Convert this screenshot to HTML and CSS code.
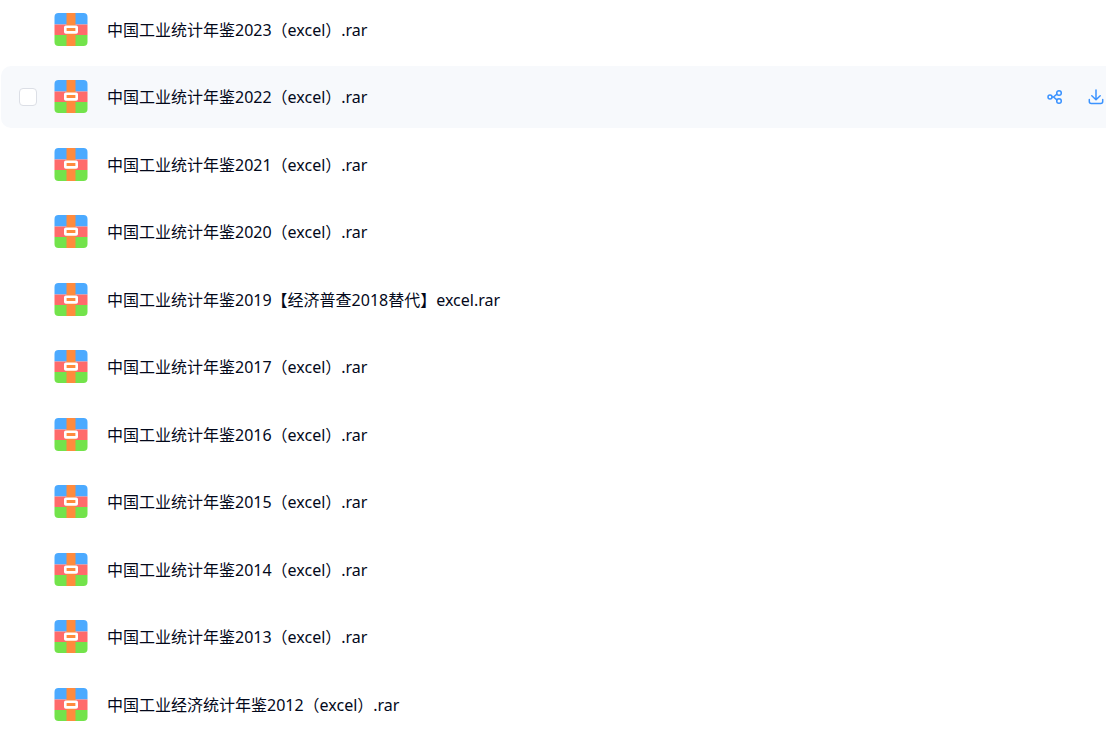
FILE: index.html
```
<!DOCTYPE html>
<html lang="zh-CN">
<head>
    <meta charset="UTF-8">
    <meta name="viewport" content="width=device-width, initial-scale=1.0">
    <title>中国工业统计年鉴</title>
    <link rel="stylesheet" href="styles.css">
</head>
<body>

    <!-- 压缩包图标 -->
    <svg class="symbols" aria-hidden="true">
        <symbol id="rar" viewBox="0 0 34 34">
            <path fill="#4caaff" d="M.5 11.500V4a4 4 0 0 1 4-4h25a4 4 0 0 1 4 4v7.500z"/>
            <path fill="#ff6b6b" d="M.5 11.500h33v10.500H.5z"/>
            <path fill="#73e34b" d="M.5 22h33v7a4 4 0 0 1-4 4h-25a4 4 0 0 1-4-4z"/>
            <path fill="#ff8b3d" d="M12.500 0h9v33h-9z"/>
            <rect x="11.300" y="13.800" width="11.400" height="5.600" rx="0.500" fill="#ff8b3d" stroke="#fff" stroke-width="2.600"/>
        </symbol>
    </svg>

    <ul class="file-list">
        <li class="file-row">
            <svg class="file-icon"><use href="#rar"/></svg>
            <a class="file-name" href="#">中国工业统计年鉴2023（excel）.rar</a>
        </li>
        <li class="file-row active">
            <input type="checkbox" class="file-check" aria-label="选择 中国工业统计年鉴2022（excel）.rar">
            <svg class="file-icon"><use href="#rar"/></svg>
            <a class="file-name" href="#">中国工业统计年鉴2022（excel）.rar</a>
            <div class="actions">
                <button type="button" aria-label="分享">
                    <svg viewBox="0 0 16 16">
                        <circle cx="3" cy="8" r="2"/>
                        <circle cx="12" cy="4" r="2.300"/>
                        <circle cx="12" cy="12" r="2.300"/>
                        <path d="M5 8h1.500l3.400-2.800M6.500 8l3.400 2.800"/>
                    </svg>
                </button>
                <button type="button" aria-label="下载">
                    <svg viewBox="0 0 16 16">
                        <path d="M8 1v9.500M3.800 6.700 8 10.700l4.200-4M1.300 10.500v2a2 2 0 0 0 2 2h9.400a2 2 0 0 0 2-2v-2"/>
                    </svg>
                </button>
            </div>
        </li>
        <li class="file-row">
            <svg class="file-icon"><use href="#rar"/></svg>
            <a class="file-name" href="#">中国工业统计年鉴2021（excel）.rar</a>
        </li>
        <li class="file-row">
            <svg class="file-icon"><use href="#rar"/></svg>
            <a class="file-name" href="#">中国工业统计年鉴2020（excel）.rar</a>
        </li>
        <li class="file-row">
            <svg class="file-icon"><use href="#rar"/></svg>
            <a class="file-name" href="#">中国工业统计年鉴2019【经济普查2018替代】excel.rar</a>
        </li>
        <li class="file-row">
            <svg class="file-icon"><use href="#rar"/></svg>
            <a class="file-name" href="#">中国工业统计年鉴2017（excel）.rar</a>
        </li>
        <li class="file-row">
            <svg class="file-icon"><use href="#rar"/></svg>
            <a class="file-name" href="#">中国工业统计年鉴2016（excel）.rar</a>
        </li>
        <li class="file-row">
            <svg class="file-icon"><use href="#rar"/></svg>
            <a class="file-name" href="#">中国工业统计年鉴2015（excel）.rar</a>
        </li>
        <li class="file-row">
            <svg class="file-icon"><use href="#rar"/></svg>
            <a class="file-name" href="#">中国工业统计年鉴2014（excel）.rar</a>
        </li>
        <li class="file-row">
            <svg class="file-icon"><use href="#rar"/></svg>
            <a class="file-name" href="#">中国工业统计年鉴2013（excel）.rar</a>
        </li>
        <li class="file-row">
            <svg class="file-icon"><use href="#rar"/></svg>
            <a class="file-name" href="#">中国工业经济统计年鉴2012（excel）.rar</a>
        </li>
    </ul>

</body>
</html>
```
FILE: styles.css
```
body {
    margin: 0;
    background-color: #fff;
    font-family: "Noto Sans", "Noto Sans CJK SC", sans-serif;
    font-size: 16px;
    line-height: 24px;
    color: #03081a;
    overflow: hidden;
}

.symbols {
    display: none;
}

.file-list {
    list-style: none;
    margin: -1px 0 0 1px;
    padding: 0;
}

.file-row {
    display: grid;
    grid-template-columns: 18px 34px 1fr auto;
    column-gap: 17px;
    align-items: center;
    box-sizing: border-box;
    min-height: 62px;
    margin-bottom: 5px;
    padding: 0 2px 0 18px;
    border-radius: 10px 0 0 10px;
}

.file-row:nth-child(even) {
    margin-bottom: 6px;
}

.file-row.active {
    background-color: #f7f9fc;
}

.file-check {
    appearance: none;
    width: 18px;
    height: 18px;
    margin: 0;
    border: 1px solid #dcdfe6;
    border-radius: 4px;
    background-color: #fff;
    cursor: pointer;
}

.file-check:checked {
    background-color: #3b93ff;
}

.file-icon {
    grid-column: 2;
    width: 34px;
    height: 34px;
}

.file-name {
    grid-column: 3;
    padding-left: 2px;
    color: inherit;
    text-decoration: none;
    white-space: nowrap;
}

.actions {
    display: flex;
    gap: 25px;
}

.actions button {
    padding: 0;
    border: none;
    background: none;
    cursor: pointer;
}

.actions svg {
    display: block;
    width: 16px;
    height: 16px;
    fill: none;
    stroke: #3b93ff;
    stroke-width: 1.5;
    stroke-linecap: round;
    stroke-linejoin: round;
}
```
